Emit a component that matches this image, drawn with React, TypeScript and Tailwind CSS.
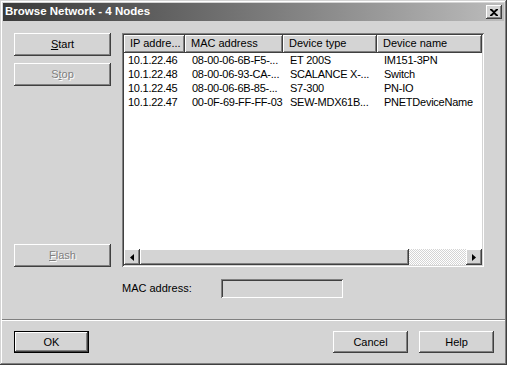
import React from 'react';

const raised =
    'shadow-[inset_-1px_-1px_#404040,inset_1px_1px_#ffffff,inset_-2px_-2px_#808080,inset_2px_2px_#d4d4d4]';
const sunken =
    'shadow-[inset_1px_1px_#808080,inset_-1px_-1px_#ffffff,inset_2px_2px_#404040,inset_-2px_-2px_#d4d4d4]';

const rows = [
    ['10.1.22.46', '08-00-06-6B-F5-...', 'ET 200S', 'IM151-3PN'],
    ['10.1.22.48', '08-00-06-93-CA-...', 'SCALANCE X-...', 'Switch'],
    ['10.1.22.45', '08-00-06-6B-85-...', 'S7-300', 'PN-IO'],
    ['10.1.22.47', '00-0F-69-FF-FF-03', 'SEW-MDX61B...', 'PNETDeviceName'],
];

const cols = [
    { title: 'IP addre...', w: 'w-[61px]' },
    { title: 'MAC address', w: 'w-[98px]' },
    { title: 'Device type', w: 'w-[94px]' },
    { title: 'Device name', w: 'w-[105px]' },
];

function Button({ children, disabled, className = '' }: { children: React.ReactNode; disabled?: boolean; className?: string }) {
    return (
        <div
            className={`flex items-center justify-center bg-[#d4d4d4] ${raised} ${
                disabled ? 'text-[#808080] [text-shadow:1px_1px_0_#ffffff]' : 'text-black'
            } ${className}`}
        >
            {children}
        </div>
    );
}

export default function App() {
    return (
        <div className="w-[507px] h-[365px] bg-[#d4d4d4] p-[3px] flex flex-col shadow-[inset_-1px_-1px_#404040,inset_1px_1px_#d4d4d4,inset_-2px_-2px_#808080,inset_2px_2px_#ffffff] font-['Liberation_Sans',Arial,sans-serif] text-[11px] select-none">
            {/* title bar */}
            <div className="h-[18px] flex items-center justify-between pl-[2px] pr-[2px] bg-gradient-to-r from-[#3a3a3a] to-[#bcbcbc]">
                <span className="text-white font-bold text-[11.5px] leading-none">Browse Network - 4 Nodes</span>
                <div className={`w-[16px] h-[14px] bg-[#d4d4d4] ${raised} flex items-center justify-center`}>
                    <svg width="8" height="7" viewBox="0 0 8 7">
                        <path d="M0 0h2l2 2 2-2h2v1L5 3.5 8 6v1H6L4 5 2 7H0V6l3-2.5L0 1z" fill="#000" />
                    </svg>
                </div>
            </div>

            <div className="flex flex-col pt-[12px]">
                <div className="flex h-[234px] pl-[11px]">
                    <div className="w-[97px] flex flex-col">
                        <Button className="h-[23px]">
                            <span><span className="underline">S</span>tart</span>
                        </Button>
                        <Button disabled className="h-[23px] mt-[7px]">
                            <span>S<span className="underline">t</span>op</span>
                        </Button>
                        <div className="flex-1" />
                        <Button disabled className="h-[23px]">
                            <span><span className="underline">F</span>lash</span>
                        </Button>
                    </div>

                    <div className={`ml-[11px] w-[362px] bg-white p-[2px] flex flex-col ${sunken}`}>
                        <div className="flex h-[18px] shrink-0">
                            {cols.map((c) => (
                                <div key={c.title} className={`${c.w} bg-[#d4d4d4] ${raised} flex items-center pl-[6px] pb-[1px]`}>
                                    {c.title}
                                </div>
                            ))}
                        </div>
                        <div className="flex-1 flex flex-col">
                            {rows.map((r) => (
                                <div key={r[0]} className="flex h-[14px] items-center tracking-[-0.25px]">
                                    {r.map((cell, i) => (
                                        <div key={i} className={`${cols[i].w} ${i === 0 ? 'pl-[4px]' : 'pl-[7px]'} whitespace-nowrap overflow-hidden`}>
                                            {cell}
                                        </div>
                                    ))}
                                </div>
                            ))}
                        </div>
                        <div className="h-[16px] flex shrink-0">
                            <div className={`w-[16px] bg-[#d4d4d4] ${raised} flex items-center justify-center`}>
                                <svg width="4" height="7" viewBox="0 0 4 7">
                                    <path d="M4 0v7L0 3.5z" fill="#000" />
                                </svg>
                            </div>
                            <div className={`w-[269px] bg-[#d4d4d4] ${raised}`} />
                            <div className="flex-1 bg-[repeating-conic-gradient(#ffffff_0_25%,#d4d4d4_0_50%)] bg-[length:2px_2px]" />
                            <div className={`w-[16px] bg-[#d4d4d4] ${raised} flex items-center justify-center`}>
                                <svg width="4" height="7" viewBox="0 0 4 7">
                                    <path d="M0 0v7l4-3.5z" fill="#000" />
                                </svg>
                            </div>
                        </div>
                    </div>
                </div>

                <div className="flex items-center h-[19px] mt-[12px] pl-[119px]">
                    <span className="w-[99px]">MAC address:</span>
                    <div className={`w-[122px] h-[19px] ${sunken} bg-[#d4d4d4]`} />
                </div>

                <div className="h-[2px] mt-[21px] mx-[-1px] border-t border-[#808080] border-b border-b-white" />

                <div className="flex h-[22px] mt-[10px] pl-[11px] pr-[10px]">
                    <div className="w-[75px] h-[22px] border border-black">
                        <Button className="h-full">OK</Button>
                    </div>
                    <div className="flex-1" />
                    <Button className="w-[75px] h-[22px]">Cancel</Button>
                    <Button className="w-[75px] h-[22px] ml-[11px]">Help</Button>
                </div>
            </div>
        </div>
    );
}
